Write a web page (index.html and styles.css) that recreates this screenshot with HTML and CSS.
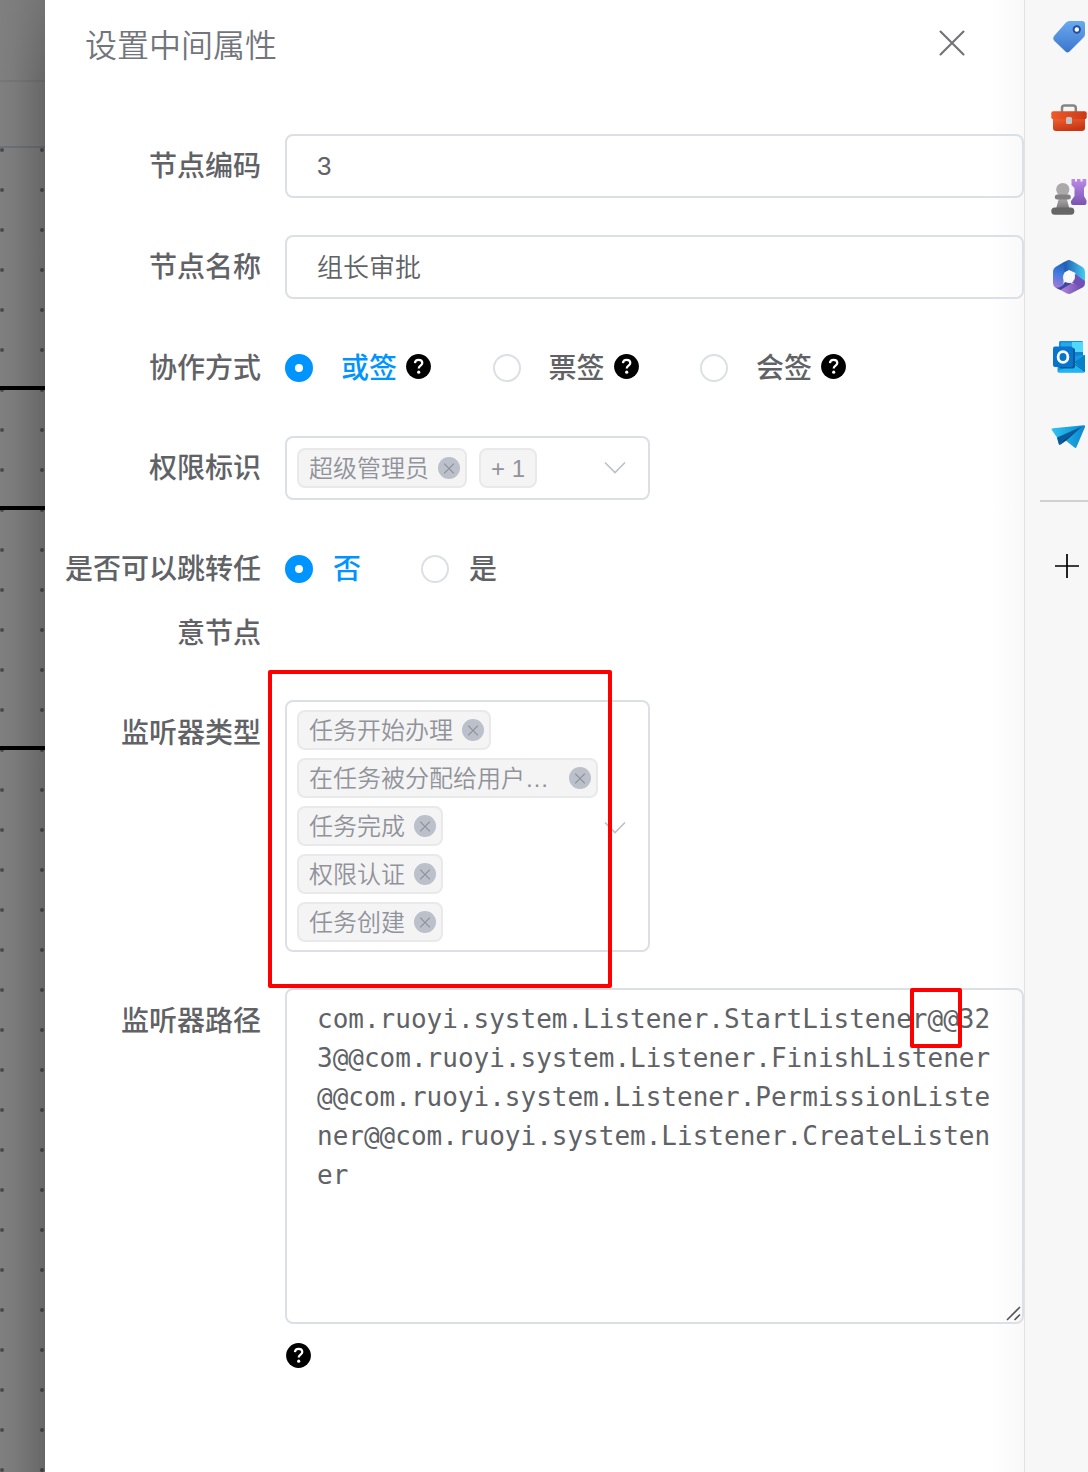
FILE: index.html
```html
<!DOCTYPE html>
<html lang="zh-CN">
<head>
<meta charset="utf-8">
<title>设置中间属性</title>
<link rel="stylesheet" href="styles.css">
</head>
<body>
<svg class="defs" aria-hidden="true">
  <defs>
    <symbol id="help" viewBox="0 0 25 25"><circle cx="12.5" cy="12.5" r="12.4" fill="#000"/><path d="M8.900 9.200C9.100 6.800 10.700 5.900 12.600 5.900C14.900 5.900 16.300 7.200 16.300 9.100C16.300 11.600 12.700 11.800 12.700 14.500" fill="none" stroke="#fff" stroke-width="2.200"/><circle cx="12.700" cy="18.200" r="1.600" fill="#fff"/></symbol>
    <symbol id="remove" viewBox="0 0 22 22"><circle cx="11" cy="11" r="11" fill="#bbc0ca"/><path d="M6.200 6.700l9.600 9.600M15.800 6.700l-9.600 9.600" stroke="#8d9097" stroke-width="1.200"/></symbol>
    <symbol id="chevron" viewBox="0 0 22 14"><path d="M1 1.500L11 11.500L21 1.500" fill="none" stroke="#bcc0c8" stroke-width="1.600"/></symbol>
  </defs>
</svg>
<div class="app">
  <div class="canvas">
    <svg width="45" height="1472">
      <defs>
        <pattern id="dots" width="40" height="40" patternUnits="userSpaceOnUse" x="0" y="130"><circle cx="2" cy="20" r="2" fill="#4a4a4a"/></pattern>
        <linearGradient id="shade"><stop offset="0" stop-color="#000" stop-opacity="0"/><stop offset=".3" stop-color="#000" stop-opacity=".03"/><stop offset="1" stop-color="#000" stop-opacity=".19"/></linearGradient>
        <linearGradient id="topfade" x2="0" y2="1"><stop offset="0" stop-color="#7f7f7f" stop-opacity=".5"/><stop offset="1" stop-color="#7f7f7f" stop-opacity="0"/></linearGradient>
      </defs>
      <rect width="45" height="1472" fill="#7f7f7f"/>
      <rect y="80" width="45" height="2" fill="#777"/>
      <rect y="146" width="45" height="2" fill="#6f7079"/>
      <rect y="148" width="45" height="1324" fill="url(#dots)"/>
      <rect width="45" height="1472" fill="url(#shade)"/>
      <rect width="45" height="80" fill="url(#topfade)"/>
      <path d="M0 388h45M0 508h45M0 748h45" stroke="#000" stroke-width="4"/>
    </svg>
  </div>
  <main class="drawer">
    <header class="header">
      <h1 class="title">设置中间属性</h1>
      <svg class="close" width="26" height="26" viewBox="0 0 26 26"><path d="M1.500 1.500l23 23M24.500 1.500l-23 23" stroke="#6f7277" stroke-width="2.100" stroke-linecap="round"/></svg>
    </header>
    <form class="form">
      <div class="row"><label class="label">节点编码</label><input class="input" value="3"></div>
      <div class="row"><label class="label">节点名称</label><input class="input input-name" value="组长审批"></div>
      <div class="row row-mode"><label class="label">协作方式</label>
        <div class="radios modes">
          <span class="option active"><i class="dot"></i><span class="text">或签</span><svg class="help"><use href="#help"/></svg></span>
          <span class="option"><i class="dot"></i><span class="text">票签</span><svg class="help"><use href="#help"/></svg></span>
          <span class="option"><i class="dot"></i><span class="text">会签</span><svg class="help"><use href="#help"/></svg></span>
        </div>
      </div>
      <div class="row"><label class="label">权限标识</label>
        <div class="select">
          <div class="tags inline">
            <span class="tag"><span>超级管理员</span><svg class="remove"><use href="#remove"/></svg></span>
            <span class="tag count">+ 1</span>
          </div>
          <svg class="chevron"><use href="#chevron"/></svg>
        </div>
      </div>
      <div class="row row-jump"><label class="label">是否可以跳转任意节点</label>
        <div class="radios jumps">
          <span class="option active"><i class="dot"></i><span class="text">否</span></span>
          <span class="option"><i class="dot"></i><span class="text">是</span></span>
        </div>
      </div>
      <div class="row row-type"><label class="label">监听器类型</label>
        <div class="select">
          <div class="tags">
            <span class="tag"><span>任务开始办理</span><svg class="remove"><use href="#remove"/></svg></span>
            <span class="tag"><span class="long">在任务被分配给用户…</span><svg class="remove"><use href="#remove"/></svg></span>
            <span class="tag"><span>任务完成</span><svg class="remove"><use href="#remove"/></svg></span>
            <span class="tag"><span>权限认证</span><svg class="remove"><use href="#remove"/></svg></span>
            <span class="tag"><span>任务创建</span><svg class="remove"><use href="#remove"/></svg></span>
          </div>
          <svg class="chevron"><use href="#chevron"/></svg>
          <div class="mark mark-type"></div>
        </div>
      </div>
      <div class="row row-path"><label class="label">监听器路径</label>
        <div class="path-field">
          <div class="textarea">com.ruoyi.system.Listener.StartListener@@323@@com.ruoyi.system.Listener.FinishListener@@com.ruoyi.system.Listener.PermissionListener@@com.ruoyi.system.Listener.CreateListener<svg class="grip" viewBox="0 0 15 15"><path d="M1 14L14 1M8.500 14L14 8.500" stroke="#555" stroke-width="1.600"/></svg><div class="mark mark-path"></div></div>
          <svg class="help"><use href="#help"/></svg>
        </div>
      </div>
    </form>
  </main>
  <aside class="sidebar">
    <svg class="app-icon" viewBox="0 0 40 40"><defs><linearGradient id="tag" x2="0" y2="1"><stop stop-color="#69aaf0"/><stop offset="1" stop-color="#3b75cc"/></linearGradient></defs><path d="M18 5.500Q19.500 4 21.500 4H34Q37 4 37 7V17Q37 19 35.500 20.500L21.500 34.500Q19.500 36.500 17.500 34.500L6.500 24Q4 21.500 6.500 18.500Z" fill="url(#tag)"/><circle cx="28.800" cy="12.500" r="3.200" fill="#fff" stroke="#264d98" stroke-width="1.900"/></svg>
    <svg class="app-icon" viewBox="0 0 40 40"><defs><linearGradient id="case" x2=".3" y2="1"><stop stop-color="#fa6c39"/><stop offset="1" stop-color="#c83714"/></linearGradient><linearGradient id="lid"><stop stop-color="#ee5a2b"/><stop offset="1" stop-color="#cb3a18"/></linearGradient></defs><path d="M14 15V11Q14 8.500 16.500 8.500H25Q27.800 8.500 27.800 11V15" fill="none" stroke="#858585" stroke-width="2.500"/><path d="M5 18H37V31Q37 34 34 34H8Q5 34 5 31Z" fill="url(#case)"/><rect x="3.300" y="14.300" width="35.400" height="8" rx="2" fill="url(#lid)"/><rect x="18" y="20" width="6" height="7" rx="1.500" fill="#c4c4c4"/></svg>
    <svg class="app-icon" viewBox="0 0 40 40"><defs><linearGradient id="rook" x2="0" y2="1"><stop stop-color="#bd8be8"/><stop offset="1" stop-color="#7854b0"/></linearGradient><linearGradient id="pawn" x2="0" y2="1"><stop stop-color="#b5b5b5"/><stop offset="1" stop-color="#777"/></linearGradient></defs><path d="M23.500 2H27V4.500H29V2H32.500V4.500H34.500V2H38.300V8L36 11V19L38.500 23.500V26Q38.500 28 36.500 28H25Q23 28 23 26V24L26.500 19V11L23.500 8Z" fill="url(#rook)"/><circle cx="14.800" cy="12.500" r="6.600" fill="#aaa"/><path d="M11.500 19H18L21.500 32H8Z" fill="url(#pawn)"/><rect x="6.800" y="17.500" width="16" height="5" rx="2.500" fill="#818181"/><rect x="3.300" y="30.500" width="23" height="7.300" rx="3.500" fill="#666"/></svg>
    <svg class="app-icon" viewBox="0 0 40 40"><defs><linearGradient id="m1" x1=".5" x2=".3" y2="1"><stop stop-color="#1d5fb4"/><stop offset=".45" stop-color="#3f7be0"/><stop offset="1" stop-color="#a77bd8"/></linearGradient><linearGradient id="m2"><stop stop-color="#2458b0"/><stop offset="1" stop-color="#45cdf3"/></linearGradient><linearGradient id="m3"><stop stop-color="#c393e0"/><stop offset="1" stop-color="#5f45ac"/></linearGradient></defs><path d="M7.500 30.500L16 28L27 26L37 19V26Q37 29 34.500 30.500L23.500 36.300Q21 37.700 18.500 36.300Z" fill="url(#m3)"/><path d="M7.500 10L16 5L18.500 4L17 14L15.500 20V27L12 31Q9.500 32 7.500 30.500Q5 29 5 26V14.500Q5 11.500 7.500 10Z" fill="url(#m1)"/><path d="M16.500 15.500V8Q17 3 21.500 3L25 4.500L34.500 10Q37 11.500 37 14.500V24Q36.500 27 34.500 28L27.500 23.500V16L21 13Z" fill="url(#m2)"/><path d="M27 17L37 24Q36.500 28 33 30L24 25.500Z" fill="#7052b6"/><path d="M7.500 30.500Q11 31.500 14.500 28.500L17 25L24 26L12.500 33Z" fill="#3f46a0"/><circle cx="21" cy="20" r="6" fill="#f9f9f9"/></svg>
    <svg class="app-icon" viewBox="0 0 40 40"><path d="M12 4H34Q35 4 35 5.500V20H11V5.500Q11 4 12 4Z" fill="#1490df"/><path d="M24 5H35V15H24Z" fill="#50d9ff"/><path d="M13 5.500H24V15H13Z" fill="#28a8ea"/><path d="M24 15H35V24H24Z" fill="#0f83d2"/><path d="M9.500 19H24L37 18V34Q37 35.500 35.500 35.500H11Q9.500 35.500 9.500 34Z" fill="#1499df"/><path d="M25 26L37 18V35Z" fill="#087fc9"/><path d="M10 34L27 26L37 34.500Q36 35.500 35 35.500H11Z" fill="#20b5f0"/><path d="M25 26L37 34.500" stroke="#0766ad"/><rect x="11" y="11" width="16" height="20.500" rx="2" fill="#075a9f"/><rect x="5" y="9.500" width="20" height="20.500" rx="2" fill="#0874cb"/><ellipse cx="15" cy="20" rx="4.900" ry="5.400" fill="none" stroke="#fff" stroke-width="2.800"/></svg>
    <svg class="app-icon" viewBox="0 0 40 40"><defs><linearGradient id="plane"><stop stop-color="#2fc4ef"/><stop offset="1" stop-color="#0b87d2"/></linearGradient></defs><path d="M3.500 12.500Q3 11.500 5 11.200L36 8.300Q37.600 8.300 37 10L28.500 30Q28 31.500 26.500 30.500L17 23L12.500 27Q11 28.500 10.500 26L9 20.500Z" fill="url(#plane)"/><path d="M9 20.500L34 9.500L15 23L12 28Q10.800 28 10.500 26Z" fill="#075b9c"/><path d="M15 23L34 9.500L18 23.700L12 28Z" fill="#0b4a80"/></svg>
    <div class="divider"></div>
    <svg class="plus" viewBox="0 0 24 24"><path d="M0 12H24M12 0V24" stroke="#000" stroke-width="1.700"/></svg>
  </aside>
</div>
</body>
</html>
```
FILE: styles.css
```css
* { box-sizing: border-box; }
body { margin: 0; background: #fff; color: #606266; font-family: "Liberation Sans", "Noto Sans CJK SC", sans-serif; }
svg { display: block; flex: none; }
.defs { position: absolute; width: 0; height: 0; }
.app { display: flex; height: 1472px; overflow: hidden; }
.canvas { width: 45px; flex: none; }
.drawer { width: 979px; flex: none; padding-left: 20px; background: linear-gradient(to left, #f9f9f9, #fff 34px); }
.header { display: flex; justify-content: space-between; align-items: center; height: 86px; padding: 0 59px 0 20px; }
.title { margin: 6px 0 0; font-size: 32px; line-height: 40px; font-weight: 350; color: #72767b; }
.form { display: flex; flex-direction: column; gap: 37px; padding-top: 48px; }
.row { display: flex; align-items: flex-start; }
.label { width: 220px; flex: none; padding: 1px 24px 0 0; margin-bottom: -1px; text-align: right; font-size: 28px; line-height: 64px; font-weight: 500; }
.input { width: 739px; height: 64px; border: 2px solid #dcdfe6; border-radius: 8px; padding: 0 30px; font: 350 26px "Liberation Sans", "Noto Sans CJK SC", sans-serif; color: #606266; background: transparent; outline: 0; }
.input-name { padding-bottom: 4px; }
.row-mode { margin-bottom: -1px; }
.row-type { margin: -2px 0 -1px; }
.row-type .label, .row-path .label { padding-top: 2px; margin-bottom: -2px; }
.radios { display: flex; height: 64px; align-items: center; font-size: 28px; font-weight: 500; }
.modes { gap: 61.5px; }
.modes .option { height: 28px; }
.jumps { gap: 60px; }
.jumps .option { height: 28px; }
.option { display: flex; align-items: center; }
.dot { width: 28px; height: 28px; border: 2px solid #dcdfe6; border-radius: 50%; background: #fff; }
.active { color: #0094ff; }
.active .dot { border: 10px solid #0094ff; }
.text { margin: -4px 0 0 28px; }
.jumps .text { margin-left: 20px; }
.help { width: 25px; height: 25px; }
.option .help { margin: -3px 0 0 9px; }
.select { position: relative; display: flex; align-items: center; justify-content: space-between; width: 365px; min-height: 64px; border: 2px solid #dcdfe6; border-radius: 8px; padding: 8px 22px 8px 10px; }
.tags { display: flex; flex-direction: column; align-items: flex-start; gap: 8px; }
.inline { flex-direction: row; gap: 12px; }
.tag { display: flex; align-items: center; gap: 9px; height: 40px; padding: 0 5px 0 10px; border: 2px solid #e9e9eb; border-radius: 8px; background: #f4f4f5; color: #909399; font-size: 24px; font-weight: 350; line-height: 36px; white-space: nowrap; }
.tag > span { padding-top: 2px; }
.count { padding: 2px 10px 0; }
.long { width: 251px; }
.remove { width: 22px; height: 22px; }
.chevron { width: 22px; height: 14px; }
.row-type .chevron { margin: 4px 0 0 -8px; }
.mark { position: absolute; border: 4px solid #f00; border-radius: 2px; }
.mark-type { left: -19px; top: -32px; width: 344px; height: 318px; }
.mark-path { left: 623px; top: -2px; width: 52px; height: 60px; }
.textarea { position: relative; width: 739px; height: 336px; border: 2px solid #dcdfe6; border-radius: 8px; padding: 10px 30px; font: 26px/39px "DejaVu Sans Mono", monospace; word-break: break-all; }
.grip { position: absolute; right: 1px; bottom: 1px; width: 15px; height: 15px; }
.path-field > .help { margin: 19px 0 0 1px; }
.sidebar { width: 64px; flex: none; display: flex; flex-direction: column; gap: 40px; border-left: 1px solid #e2e2e2; padding: 17px 0 0 23px; background: #f7f7f7; }
.app-icon { width: 40px; height: 40px; }
.divider { height: 2px; margin: 3px 0 0 -8px; background: #d0d0d0; }
.plus { width: 24px; height: 24px; margin: 12px 0 0 7px; }
```
